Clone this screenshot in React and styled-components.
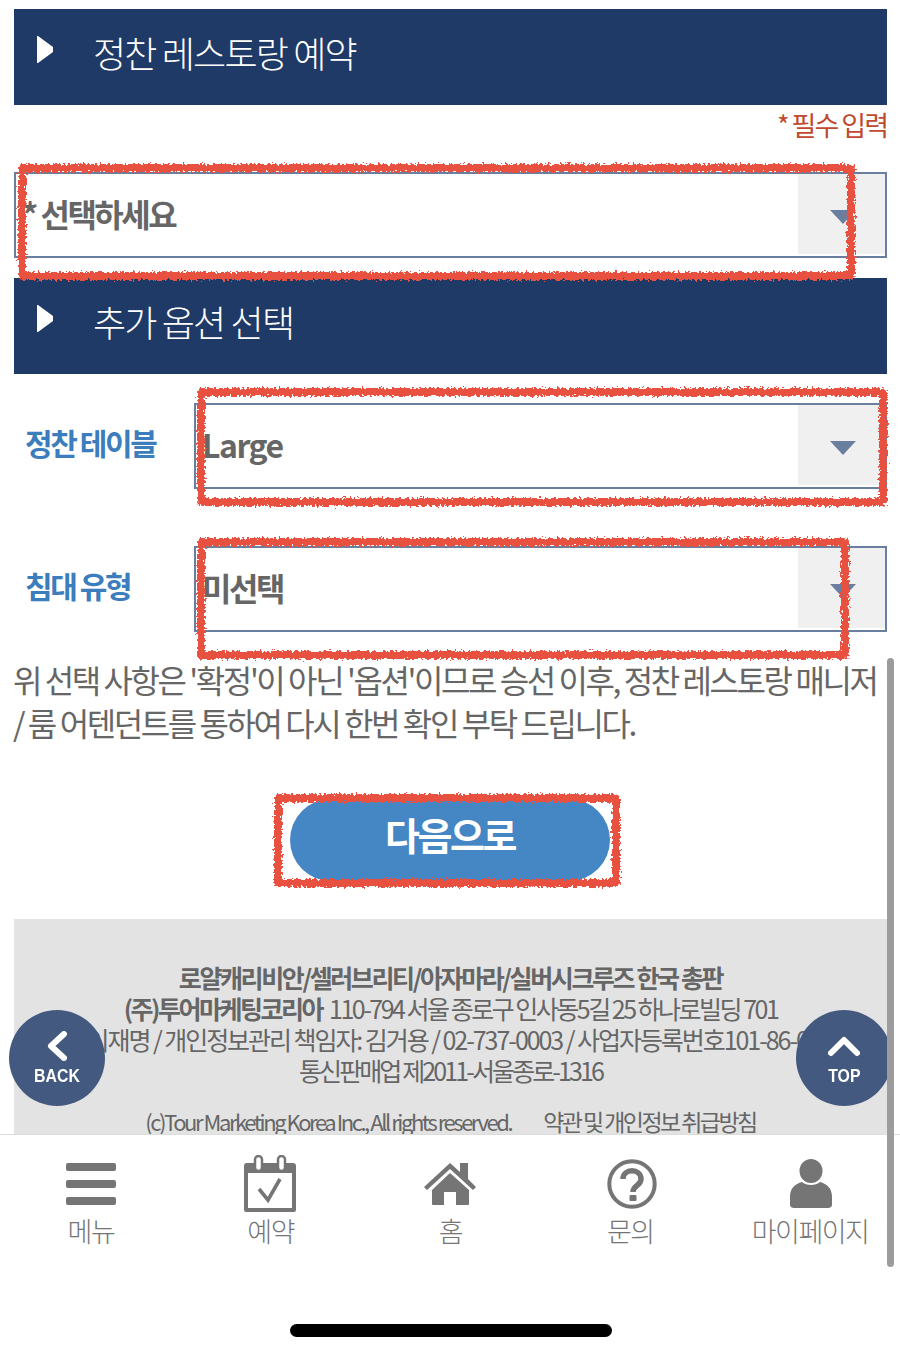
import React from 'react'
import styled, { createGlobalStyle } from 'styled-components'

const GlobalStyle = createGlobalStyle`
    html, body {
        margin: 0;
        padding: 0;
        background: #fff;
    }
    * {
        box-sizing: border-box;
    }
`

const KR = `"Noto Sans CJK KR", "Noto Sans", sans-serif`

function HeaderArrow() {
    return (
        <svg width="16" height="27" viewBox="0 0 16 27">
            <path d="M1 0 L16 11 V16 L1 27 H0 V0 Z" fill="#fff" />
        </svg>
    )
}

function CaretDown() {
    return (
        <svg width="26" height="14" viewBox="0 0 26 14">
            <path d="M0 0 H26 L13 14 Z" fill="#6a7f9f" />
        </svg>
    )
}

function MenuIcon() {
    return (
        <svg width="50" height="42" viewBox="0 0 50 42" fill="#757575">
            <rect x="0" y="0" width="50" height="8" rx="2" />
            <rect x="0" y="17" width="50" height="8" rx="2" />
            <rect x="0" y="34" width="50" height="8" rx="2" />
        </svg>
    )
}

function CalendarIcon() {
    return (
        <svg width="54" height="58" viewBox="0 0 54 58">
            <path d="M3 8 H50 a3 3 0 0 1 3 3 V55 a2 2 0 0 1 -2 2 H3 a2 2 0 0 1 -2 -2 V11 a3 3 0 0 1 2 -3 Z" fill="#757575" />
            <rect x="5" y="18" width="44" height="35" fill="#fff" />
            <rect x="12" y="1" width="7" height="15" rx="3.5" fill="#fff" stroke="#757575" strokeWidth="2.5" />
            <rect x="35" y="1" width="7" height="15" rx="3.5" fill="#fff" stroke="#757575" strokeWidth="2.5" />
            <path d="M16 34 L25 45 L37 24" fill="none" stroke="#757575" strokeWidth="3.6" />
        </svg>
    )
}

function HomeIcon() {
    return (
        <svg width="52" height="42" viewBox="0 0 52 42" fill="#757575">
            <path d="M26 0 L36 9 V0 H44 V16 L52 24 L49 27 L26 6 L3 27 L0 24 Z" />
            <path d="M26 10 L45 27 V41 a1 1 0 0 1 -1 1 H32 V29 H20 V42 H9 a1 1 0 0 1 -1 -1 V27 Z" />
        </svg>
    )
}

function HelpIcon() {
    return (
        <svg width="50" height="50" viewBox="0 0 50 50">
            <circle cx="25" cy="25" r="22.7" fill="none" stroke="#757575" strokeWidth="4" />
            <path d="M16 20 C16 9 34 9 34 20 C34 27 26 26 26 33" fill="none" stroke="#757575" strokeWidth="5.5" />
            <rect x="22.5" y="36" width="7" height="6" rx="1" fill="#757575" />
        </svg>
    )
}

function UserIcon() {
    return (
        <svg width="42" height="50" viewBox="0 0 42 50" fill="#757575">
            <ellipse cx="21" cy="12" rx="11.5" ry="12" />
            <path d="M0 38 C0 29 5 25 12 23 C16 27 26 27 30 23 C37 25 42 29 42 38 V46 C42 48 40 49 38 49 H4 C2 49 0 48 0 46 Z" />
        </svg>
    )
}

function Select({ value, latin }) {
    return (
        <SelectBox>
            <SelectValue latin={latin}>{value}</SelectValue>
            <SelectButton><CaretDown /></SelectButton>
        </SelectBox>
    )
}

const tabs = [
    { label: '메뉴', icon: <MenuIcon />, shift: 0 },
    { label: '예약', icon: <CalendarIcon />, shift: -1 },
    { label: '홈', icon: <HomeIcon />, shift: 0 },
    { label: '문의', icon: <HelpIcon />, shift: 2 },
    { label: '마이페이지', icon: <UserIcon />, shift: 1 },
]

export default function App() {
    return (
        <Screen>
            <GlobalStyle />
            <Page>
                <SectionBar>
                    <HeaderArrow />
                    <SectionTitle>정찬 레스토랑 예약</SectionTitle>
                </SectionBar>
                <Required>* 필수 입력</Required>
                <Select value="* 선택하세요" />
                <SecondBar>
                    <HeaderArrow />
                    <SectionTitle>추가 옵션 선택</SectionTitle>
                </SecondBar>
                <OptionRow>
                    <OptionLabel>정찬 테이블</OptionLabel>
                    <Select value="Large" latin />
                </OptionRow>
                <OptionRow>
                    <OptionLabel>침대 유형</OptionLabel>
                    <Select value="미선택" />
                </OptionRow>
                <Notice>
                    위 선택 사항은 '확정'이 아닌 '옵션'이므로 승선 이후, 정찬 레스토랑 매니저<br />
                    / 룸 어텐던트를 통하여 다시 한번 확인 부탁 드립니다.
                </Notice>
                <NextWrap>
                    <NextButton>다음으로</NextButton>
                </NextWrap>
                <Footer>
                    <TitleLine><strong>로얄캐리비안/셀러브리티/아자마라/실버시크루즈 한국 총판</strong></TitleLine>
                    <AddressLine><strong>(주)투어마케팅코리아</strong> 110-794 서울 종로구 인사동5길 25 하나로빌딩 701</AddressLine>
                    <CompanyLine>대표 이재명 / 개인정보관리 책임자: 김거용 / 02-737-0003 / 사업자등록번호101-86-0</CompanyLine>
                    <LicenseLine>통신판매업 제2011-서울종로-1316</LicenseLine>
                    <FooterLegal>
                        <LegalCopy>(c)Tour Marketing Korea Inc., All rights reserved.</LegalCopy>
                        <span>약관 및 개인정보 취급방침</span>
                    </FooterLegal>
                </Footer>
            </Page>

            <FloatButton side="left">
                <FloatIcon>
                    <svg width="22" height="30" viewBox="0 0 22 30">
                        <path d="M18 3 L5 15 L18 27" fill="none" stroke="#fff" strokeWidth="6" strokeLinecap="round" strokeLinejoin="round" />
                    </svg>
                </FloatIcon>
                <FloatLabel>BACK</FloatLabel>
            </FloatButton>
            <FloatButton side="right">
                <FloatIcon>
                    <svg width="32" height="22" viewBox="0 0 32 22">
                        <path d="M3 18 L16 5 L29 18" fill="none" stroke="#fff" strokeWidth="6" strokeLinecap="round" strokeLinejoin="round" />
                    </svg>
                </FloatIcon>
                <FloatLabel>TOP</FloatLabel>
            </FloatButton>

            <TabBar>
                {tabs.map(tab => (
                    <Tab key={tab.label}>
                        <TabIcon shift={tab.shift}>{tab.icon}</TabIcon>
                        <TabLabel>{tab.label}</TabLabel>
                    </Tab>
                ))}
            </TabBar>
            <ScrollThumb />
            <HomeIndicator />

            {/* hand drawn red boxes sitting on top of the screenshot */}
            <FilterDefs width="0" height="0">
                <filter id="rough" x="-2%" y="-5%" width="104%" height="110%" colorInterpolationFilters="sRGB">
                    <feTurbulence type="fractalNoise" baseFrequency="0.4" numOctaves="2" seed="4" />
                    <feDisplacementMap in="SourceGraphic" scale="7" xChannelSelector="R" yChannelSelector="G" />
                </filter>
            </FilterDefs>
            <Marker left={18} top={164} width={837} height={116} />
            <Marker left={197} top={388} width={690} height={118} />
            <Marker left={197} top={538} width={652} height={121} />
            <Marker left={274} top={794} width={346} height={93} />
        </Screen>
    )
}

const Screen = styled.div`
    position: relative;
    width: 900px;
    height: 1354px;
    overflow: hidden;
    background: #fff;
    font-family: ${KR};
`

const Page = styled.div`
    display: flex;
    flex-direction: column;
    padding: 9px 13px 0 14px;
`

const SectionBar = styled.div`
    display: flex;
    align-items: flex-start;
    height: 96px;
    padding: 27px 0 0 23px;
    background: #1f3a66;
`

const SecondBar = styled(SectionBar)`
    margin-top: 20px;
`

const SectionTitle = styled.h2`
    margin: -11px 0 0 40px;
    color: #fff;
    font-size: 36px;
    font-weight: 300;
    line-height: 54px;
    letter-spacing: -1.8px;
`

const Required = styled.div`
    height: 67px;
    color: #c0492f;
    font-size: 27px;
    line-height: 40px;
    letter-spacing: -2px;
    text-align: right;
`

const SelectBox = styled.div`
    display: flex;
    height: 86px;
    border: 2px solid #6a7f9f;
    background: #fff;
`

const SelectValue = styled.div`
    flex: 1;
    padding: 15px 0 0 6px;
    color: #666;
    font-size: 32px;
    font-weight: 700;
    line-height: 48px;
    letter-spacing: ${props => (props.latin ? '-1.5px' : '-2.5px')};
`

const SelectButton = styled.div`
    display: flex;
    align-items: center;
    justify-content: center;
    width: 87px;
    padding: 5px 0 0 3px;
    margin-bottom: 2px;
    background: #f0f0f0;
`

const OptionRow = styled.div`
    display: grid;
    grid-template-columns: 180px 1fr;
    margin-top: 29px;

    & + & {
        margin-top: 57px;
    }
`

const OptionLabel = styled.div`
    padding: 16px 0 0 11px;
    color: #3b7dbd;
    font-size: 30px;
    font-weight: 700;
    line-height: 46px;
    letter-spacing: -2.4px;
`

const Notice = styled.p`
    margin: 26px 0 0 -1px;
    color: #666;
    font-size: 32px;
    line-height: 43px;
    letter-spacing: -2.42px;
    white-space: nowrap;
`

const NextWrap = styled.div`
    display: flex;
    justify-content: center;
    margin-top: 55px;
    padding-right: 1px;
`

const NextButton = styled.button`
    width: 320px;
    height: 82px;
    padding: 0 0 13px;
    border: 0;
    border-radius: 41px;
    background: #4586c4;
    color: #fff;
    font-family: ${KR};
    font-size: 38px;
    font-weight: 700;
    letter-spacing: -2.4px;
`

const Footer = styled.footer`
    height: 300px;
    margin-top: 38px;
    padding-top: 43px;
    background: #e3e3e3;
    color: #666;
    font-size: 25px;
    line-height: 31px;
    letter-spacing: -2.3px;
    text-align: center;
    white-space: nowrap;

    strong {
        font-weight: 700;
    }
`

const FooterLine = styled.div`
    display: flex;
    justify-content: center;
    gap: 7px;
`

const TitleLine = styled(FooterLine)`
    letter-spacing: -2.4px;
`

const AddressLine = styled(FooterLine)`
    letter-spacing: -2.5px;
`

// the end of this line runs under the TOP button
const CompanyLine = styled(FooterLine)`
    padding-right: 52px;
    letter-spacing: -2.05px;
`

const LicenseLine = styled(FooterLine)`
    letter-spacing: -2.9px;
`

const FooterLegal = styled(FooterLine)`
    gap: 32px;
    margin-top: 20px;
    font-size: 23px;
    letter-spacing: -2.55px;
`

const LegalCopy = styled.span`
    font-size: 22px;
    letter-spacing: -2.45px;
`

const FloatButton = styled.div`
    position: absolute;
    top: 1010px;
    left: ${props => (props.side === 'left' ? '9px' : '796px')};
    display: flex;
    flex-direction: column;
    align-items: center;
    width: 96px;
    height: 96px;
    padding-top: 16px;
    border-radius: 50%;
    background: #44597f;
`

const FloatIcon = styled.div`
    display: flex;
    align-items: center;
    justify-content: center;
    height: 40px;
`

const FloatLabel = styled.span`
    color: #fff;
    font-family: "Liberation Sans", sans-serif;
    font-size: 18px;
    font-weight: 700;
    line-height: 20px;
    transform: scaleX(0.88);
`

const TabBar = styled.nav`
    position: absolute;
    left: 0;
    top: 1134px;
    display: grid;
    grid-template-columns: repeat(5, 1fr);
    align-items: start;
    width: 900px;
    height: 220px;
    padding-left: 1px;
    border-top: 1px solid #ddd;
    background: #fff;
`

const Tab = styled.div`
    display: flex;
    flex-direction: column;
    align-items: center;
    padding-top: 20px;
`

const TabIcon = styled.div`
    display: flex;
    align-items: center;
    justify-content: center;
    height: 58px;
    transform: translateX(${props => props.shift}px);
`

const TabLabel = styled.div`
    margin-top: -2px;
    color: #757575;
    font-size: 27px;
    font-weight: 300;
    line-height: 40px;
    letter-spacing: -1.5px;
`

const ScrollThumb = styled.div`
    position: absolute;
    left: 887px;
    top: 658px;
    width: 7px;
    height: 609px;
    border-radius: 4px;
    background: #9c9c9c;
`

const HomeIndicator = styled.div`
    position: absolute;
    left: 290px;
    top: 1324px;
    width: 322px;
    height: 13px;
    border-radius: 7px;
    background: #000;
`

const FilterDefs = styled.svg`
    position: absolute;
`

const Marker = styled.div.attrs(props => ({
    style: { left: props.left, top: props.top, width: props.width, height: props.height },
}))`
    position: absolute;
    border: 8px solid #e8503f;
    border-radius: 5px;
    filter: url(#rough);
`
